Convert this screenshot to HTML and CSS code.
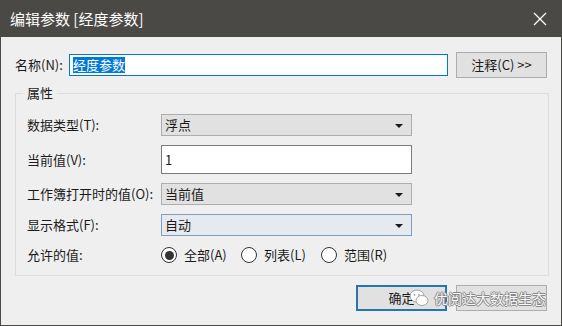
FILE: index.html
```html
<!DOCTYPE html>
<html lang="zh-CN">

<head>
  <meta charset="UTF-8">
  <meta name="viewport" content="width=device-width, initial-scale=1.0">
  <title>编辑参数</title>
  <link rel="stylesheet" href="styles.css">
</head>

<body>
  <div class="dialog">
    <div class="titlebar">
      <span class="title">编辑参数 [经度参数]</span>
      <svg class="close" width="14" height="14" viewBox="0 0 14 14">
        <path d="M1 1 L13 13 M13 1 L1 13" stroke="#fff" stroke-width="1.3" fill="none" />
      </svg>
    </div>

    <div class="content">
      <div class="name-row">
        <label class="name-label">名称(N):</label>
        <div class="textbox name-box"><span class="sel">经度参数</span></div>
        <button class="btn note-btn">注释(C) &gt;&gt;</button>
      </div>

      <fieldset class="props">
        <legend>属性</legend>
        <div class="prop-grid">
          <label>数据类型(T):</label>
          <div class="combo"><span>浮点</span><i class="arrow"></i></div>

          <label>当前值(V):</label>
          <div class="textbox value-box">1</div>

          <label>工作簿打开时的值(O):</label>
          <div class="combo"><span>当前值</span><i class="arrow"></i></div>

          <label>显示格式(F):</label>
          <div class="combo combo-hover"><span>自动</span><i class="arrow"></i></div>

          <label>允许的值:</label>
          <div class="radios">
            <div class="option"><span class="radio checked"></span><span class="radio-text">全部(A)</span></div>
            <div class="option"><span class="radio"></span><span class="radio-text">列表(L)</span></div>
            <div class="option"><span class="radio"></span><span class="radio-text">范围(R)</span></div>
          </div>
        </div>
      </fieldset>

      <div class="actions">
        <button class="btn btn-default">确定</button>
        <button class="btn"></button>
        <div class="watermark">
          <svg width="20" height="18" viewBox="0 0 20 18">
            <ellipse cx="8" cy="7" rx="7" ry="6" fill="#fff" stroke="#999" stroke-width="0.9" />
            <circle cx="5.5" cy="6" r="0.9" fill="#aaa" />
            <circle cx="10" cy="6" r="0.9" fill="#aaa" />
            <ellipse cx="13" cy="11.5" rx="6" ry="5" fill="#fff" stroke="#999" stroke-width="0.9" />
          </svg>
          <span>优阅达大数据生态</span>
        </div>
      </div>
    </div>
  </div>
</body>

</html>
```

FILE: styles.css
```css
body {
  margin: 0;
  padding: 0;
  background-color: #f0f0f0;
  color: #1b1b1b;
  font-family: "Noto Sans CJK SC", sans-serif;
  font-size: 13px;
}

.dialog {
  width: 562px;
  height: 326px;
  box-sizing: border-box;
  border: 1px solid #4b4946;
  border-top: 0;
  background-color: #f0efef;
}

.titlebar {
  height: 37px;
  margin: 0 -1px;
  background-color: #4b4946;
  display: flex;
  align-items: center;
  justify-content: space-between;
  padding: 0 15px 0 10px;
}

.title {
  color: #fff;
  font-size: 15px;
  line-height: 20px;
}

.content {
  padding: 15px 14px 0 13px;
}

.name-row {
  display: flex;
  align-items: center;
  height: 26px;
}

.name-label {
  width: 55px;
  padding-left: 1px;
  box-sizing: border-box;
  line-height: 18px;
  white-space: nowrap;
}

.textbox {
  box-sizing: border-box;
  background-color: #fff;
  border: 1px solid #7a7a7a;
}

.name-box {
  width: 380px;
  height: 22px;
  border-color: #0078d7;
  padding: 2px 3px;
  line-height: 16px;
}

.sel {
  display: inline-block;
  background-color: #0078d7;
  color: #fff;
  line-height: 16px;
}

.btn {
  font-family: inherit;
  font-size: 13px;
  color: #1b1b1b;
  background-color: #e1e1e1;
  border: 1px solid #adadad;
  width: 91px;
  height: 26px;
  padding: 0;
  line-height: 18px;
}

.note-btn {
  margin-left: 8px;
}

.props {
  margin: 5px 0 0 1px;
  width: 534px;
  box-sizing: border-box;
  border: 1px solid #dcdcdc;
  padding: 0 0 10px 11px;
}

.props legend {
  margin-left: -4px;
  padding: 0 4px;
  line-height: 20px;
}

.prop-grid {
  margin-top: 11px;
  display: grid;
  grid-template-columns: 134px 251px;
  grid-template-rows: 22px 29px 22px 22px 20px;
  row-gap: 9px;
  align-items: center;
}

.prop-grid label {
  line-height: 18px;
  white-space: nowrap;
}

.combo {
  box-sizing: border-box;
  height: 22px;
  background-color: #e1e1e1;
  border: 1px solid #adadad;
  display: flex;
  align-items: center;
  justify-content: space-between;
  padding: 0 8px 0 3px;
  line-height: 18px;
}

.combo-hover {
  background-color: #e6eaef;
  border-color: #7f9fc2;
}

.arrow {
  width: 0;
  height: 0;
  border-left: 4px solid transparent;
  border-right: 4px solid transparent;
  border-top: 4px solid #1b1b1b;
  margin-top: 1px;
}

.value-box {
  height: 29px;
  padding: 0 3px;
  line-height: 27px;
}

.radios {
  display: flex;
  align-items: center;
  height: 20px;
}

.option {
  width: 80px;
  display: flex;
  align-items: center;
}

.radio {
  width: 16px;
  height: 16px;
  box-sizing: border-box;
  border: 1px solid #333;
  border-radius: 50%;
  background-color: #fff;
  display: flex;
  align-items: center;
  justify-content: center;
}

.radio.checked::after {
  content: "";
  width: 9px;
  height: 9px;
  border-radius: 50%;
  background-color: #333;
}

.radio-text {
  margin-left: 7px;
  line-height: 18px;
  white-space: nowrap;
}

.actions {
  position: relative;
  margin-top: 9px;
  display: flex;
  justify-content: flex-end;
  gap: 9px;
}

.btn-default {
  border: 2px solid #2676b0;
}

.watermark {
  position: absolute;
  right: 1px;
  top: 3px;
  display: flex;
  align-items: center;
  gap: 5px;
  color: #f6f6f6;
  font-size: 14px;
  line-height: 20px;
  text-shadow: 1px 0 0 #888, -1px 0 0 #888, 0 1px 0 #888, 0 -1px 0 #888;
}
```
